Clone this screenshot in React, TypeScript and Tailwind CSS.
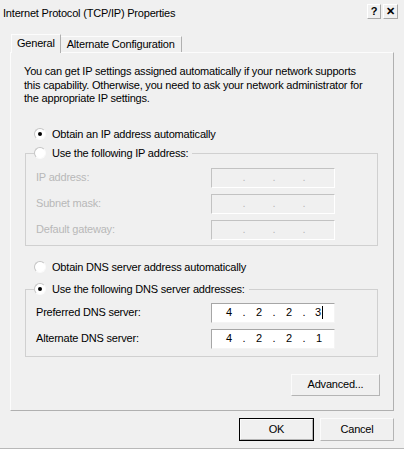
import React from 'react';

type RadioProps = { checked?: boolean };

const Radio = ({ checked }: RadioProps) => (
  <span className="relative inline-flex h-[12px] w-[12px] shrink-0 items-center justify-center rounded-full border border-t-[#c4c4c4] border-l-[#c4c4c4] border-r-[#fafafa] border-b-[#fafafa] bg-white">
    {checked && <span className="h-[4px] w-[4px] rounded-full bg-black" />}
  </span>
);

const IpField = ({ value, disabled, cursor }: { value?: string[]; disabled?: boolean; cursor?: boolean }) => {
  const parts = value ?? ['', '', '', ''];
  return (
    <div
      className={`flex h-[20px] w-[124px] items-center border pl-[4px] ${
        disabled
          ? 'border-t-[#c2c2c2] border-l-[#c2c2c2] border-r-white border-b-white bg-[#f0f0f0] text-[#b8b8b8]'
          : 'border-t-[#a6a6a6] border-l-[#a6a6a6] border-r-[#f4f4f4] border-b-[#f4f4f4] bg-white text-black'
      }`}
    >
      {parts.map((p, i) => (
        <React.Fragment key={i}>
          <span className="w-[26px] text-center">
            {p}
            {cursor && i === 3 && <span className="ml-[1px] inline-block h-[13px] w-px bg-black align-middle" />}
          </span>
          {i < 3 && <span className="w-[4px] text-center">.</span>}
        </React.Fragment>
      ))}
    </div>
  );
};

const Button = ({ children, primary, className = '' }: { children: React.ReactNode; primary?: boolean; className?: string }) => (
  <div
    className={`flex items-center justify-center ${
      primary ? 'border border-black' : 'border border-t-[#fbfbfb] border-l-[#fbfbfb] border-r-[#b4b4b4] border-b-[#b4b4b4]'
    } ${className}`}
  >
    {primary ? (
      <div className="flex h-full w-full items-center justify-center border border-t-[#fbfbfb] border-l-[#fbfbfb] border-r-[#b4b4b4] border-b-[#b4b4b4]">
        {children}
      </div>
    ) : (
      children
    )}
  </div>
);

export default function App() {
  return (
    <div className="h-[450px] w-[404px] overflow-hidden bg-white font-['Liberation_Sans',Arial,sans-serif] text-[11px] leading-[13px] tracking-[-0.2px] text-black">
      <div className="flex h-[449px] w-[404px] flex-col border-b border-[#b8b8b8] bg-[#f0f0f0]">
        {/* title bar */}
        <div className="flex h-[26px] items-center justify-between pl-[3px] pr-[6px]">
          <span>Internet Protocol (TCP/IP) Properties</span>
          <div className="mb-[3px] flex gap-[2px]">
            <span className="flex h-[15px] w-[14px] items-center justify-center border border-t-white border-l-white border-r-[#a8a8a8] border-b-[#a8a8a8] text-[11px] font-bold">?</span>
            <span className="flex h-[15px] w-[15px] items-center justify-center border border-t-white border-l-white border-r-[#a8a8a8] border-b-[#a8a8a8] text-[11px] font-bold">✕</span>
          </div>
        </div>

        {/* tabs */}
        <div className="mt-[8px] flex items-end pl-[11px]">
          <div className="relative z-10 -mb-px flex h-[19px] items-center border border-b-0 border-t-[#fcfcfc] border-l-[#fcfcfc] border-r-[#b0b0b0] bg-[#f0f0f0] px-[5px] pb-[2px]">
            General
          </div>
          <div className="flex h-[16px] items-center border border-b-0 border-l-0 border-t-[#fcfcfc] border-r-[#b0b0b0] px-[6px]">
            Alternate Configuration
          </div>
        </div>

        {/* panel */}
        <div className="mx-[10px] flex h-[359px] flex-col border border-t-[#fcfcfc] border-l-[#fcfcfc] border-r-[#b0b0b0] border-b-[#b0b0b0]">
          <p className="pl-[13px] pt-[12px] leading-[13.5px]">
            You can get IP settings assigned automatically if your network supports
            <br />
            this capability. Otherwise, you need to ask your network administrator for
            <br />
            the appropriate IP settings.
          </p>

          <label className="ml-[23px] mt-[22px] flex items-center gap-[6px]">
            <Radio checked />
            <span>Obtain an IP address automatically</span>
          </label>

          <fieldset className="ml-[14px] mt-[6px] w-[353px] border border-[#d0d0d0] pb-[5px]">
            <legend className="ml-[8px] flex items-center gap-[6px] pr-[4px]">
              <Radio />
              <span>Use the following IP address:</span>
            </legend>
            <div className="mt-[8px] flex flex-col gap-[6px] pl-[10px]">
              {['IP address:', 'Subnet mask:', 'Default gateway:'].map((l) => (
                <div key={l} className="flex items-center">
                  <span className="w-[175px] text-[#b8b8b8]">{l}</span>
                  <IpField disabled />
                </div>
              ))}
            </div>
          </fieldset>

          <label className="ml-[23px] mt-[15px] flex items-center gap-[6px]">
            <Radio />
            <span>Obtain DNS server address automatically</span>
          </label>

          <fieldset className="ml-[14px] mt-[9px] w-[353px] border border-[#d0d0d0] pb-[7px]">
            <legend className="ml-[8px] flex items-center gap-[6px] pr-[4px]">
              <Radio checked />
              <span>Use the following DNS server addresses:</span>
            </legend>
            <div className="mt-[7px] flex flex-col gap-[6px] pl-[10px]">
              <div className="flex items-center">
                <span className="w-[175px]">Preferred DNS server:</span>
                <IpField value={['4', '2', '2', '3']} cursor />
              </div>
              <div className="flex items-center">
                <span className="w-[175px]">Alternate DNS server:</span>
                <IpField value={['4', '2', '2', '1']} />
              </div>
            </div>
          </fieldset>

          <div className="mt-[17px] flex justify-end pr-[13px]">
            <Button className="h-[22px] w-[89px]">Advanced...</Button>
          </div>
        </div>

        {/* dialog buttons */}
        <div className="mt-[7px] flex justify-end gap-[6px] pr-[10px]">
          <Button primary className="h-[23px] w-[75px]">OK</Button>
          <Button className="h-[23px] w-[74px]">Cancel</Button>
        </div>
      </div>
    </div>
  );
}
